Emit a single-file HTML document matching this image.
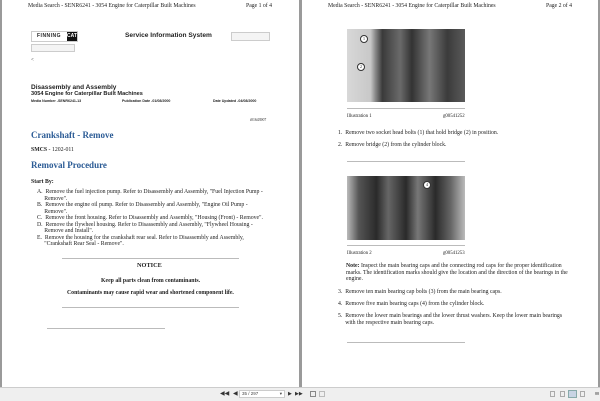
<!DOCTYPE html>
<html><head><meta charset="utf-8"><style>
*{margin:0;padding:0;box-sizing:border-box}
body{width:600px;height:401px;background:#9a9a9a;position:relative;overflow:hidden;font-family:"Liberation Serif",serif;color:#222}
.pg{position:absolute;top:0;height:387px;background:#fff}
.t{position:absolute;white-space:nowrap;font-size:5.8px;line-height:6px}
.s{font-family:"Liberation Sans",sans-serif;font-weight:bold}
.h{color:#2b5b95;font-size:9px;font-weight:bold;line-height:10px}
.ln{position:absolute;height:1px;background:#bbb}
.b{font-weight:bold}
</style></head><body>
<div class="pg" style="left:2px;width:297px"></div>
<div class="pg" style="left:302px;width:296px"></div>
<div style="position:absolute;left:0;top:387px;width:600px;height:14px;background:#efefef;border-top:1px solid #ccc"></div>

<!-- left page -->
<div class="t" style="left:28px;top:3px;font-size:5.75px">Media Search - SENR6241 - 3054 Engine for Caterpillar Built Machines</div>
<div class="t" style="left:246px;top:3px;font-size:5.75px">Page 1 of 4</div>
<div style="position:absolute;left:31px;top:31px;width:47px;height:11px;border:1px solid #ccc"></div>
<div class="t s" style="left:37px;top:33px;font-size:5px;letter-spacing:.5px">FINNING</div>
<div style="position:absolute;left:67px;top:32px;width:10px;height:9px;background:#111;color:#fff;font:bold 5px 'Liberation Sans',sans-serif;text-align:center;line-height:9px">CAT</div>
<div style="position:absolute;left:31px;top:44px;width:44px;height:8px;border:1px solid #ccc;background:#f4f4f4"></div>
<div class="t s" style="left:125px;top:32px;font-size:6.6px;line-height:7px">Service Information System</div>
<div style="position:absolute;left:231px;top:32px;width:39px;height:9px;border:1px solid #ccc;background:#f4f4f4"></div>
<div class="t" style="left:31px;top:58px;font-size:5px">&lt;</div>
<div class="t s" style="left:31px;top:84px;font-size:6.5px;line-height:7px">Disassembly and Assembly</div>
<div class="t s" style="left:31px;top:91px;font-size:5.6px">3054 Engine for Caterpillar Built Machines</div>
<div class="t s" style="left:31px;top:98px;font-size:3.6px">Media Number -SENR6241-13</div>
<div class="t s" style="left:122px;top:98px;font-size:3.6px">Publication Date -01/08/2000</div>
<div class="t s" style="left:213px;top:98px;font-size:3.6px">Date Updated -04/08/2000</div>
<div class="t" style="left:250px;top:117px;font-size:3.8px">i01643907</div>
<div class="t h" style="left:31px;top:130px">Crankshaft - Remove</div>
<div class="t" style="left:31px;top:147px"><b>SMCS</b> - 1202-011</div>
<div class="t h" style="left:31px;top:160px">Removal Procedure</div>
<div class="t b" style="left:31px;top:179px">Start By:</div>
<div class="t" style="left:37px;top:189px;line-height:6.5px">A.&nbsp; Remove the fuel injection pump. Refer to Disassembly and Assembly, "Fuel Injection Pump -<br>&nbsp;&nbsp;&nbsp;&nbsp;&nbsp;Remove".<br>B.&nbsp; Remove the engine oil pump. Refer to Disassembly and Assembly, "Engine Oil Pump -<br>&nbsp;&nbsp;&nbsp;&nbsp;&nbsp;Remove".<br>C.&nbsp; Remove the front housing. Refer to Disassembly and Assembly, "Housing (Front) - Remove".<br>D.&nbsp; Remove the flywheel housing. Refer to Disassembly and Assembly, "Flywheel Housing -<br>&nbsp;&nbsp;&nbsp;&nbsp;&nbsp;Remove and Install".<br>E.&nbsp; Remove the housing for the crankshaft rear seal. Refer to Disassembly and Assembly,<br>&nbsp;&nbsp;&nbsp;&nbsp;&nbsp;"Crankshaft Rear Seal - Remove".</div>
<div class="ln" style="left:62px;top:258px;width:177px"></div>
<div class="t b" style="left:137px;top:263px;font-size:6.3px">NOTICE</div>
<div class="t b" style="left:101px;top:278px">Keep all parts clean from contaminants.</div>
<div class="t b" style="left:67px;top:290px">Contaminants may cause rapid wear and shortened component life.</div>
<div class="ln" style="left:62px;top:307px;width:177px"></div>
<div class="ln" style="left:47px;top:328px;width:118px"></div>

<!-- right page -->
<div class="t" style="left:328px;top:3px;font-size:5.75px">Media Search - SENR6241 - 3054 Engine for Caterpillar Built Machines</div>
<div class="t" style="left:546px;top:3px;font-size:5.75px">Page 2 of 4</div>
<div style="position:absolute;left:347px;top:29px;width:118px;height:73px;background:linear-gradient(90deg,#d8d8d8 0,#c8c8c8 20%,#8a8a8a 24%,#3a3a3a 30%,#6a6a6a 45%,#333 55%,#777 70%,#3b3b3b 85%,#5a5a5a 100%)"></div>
<div style="position:absolute;left:360px;top:35px;width:8px;height:8px;border-radius:50%;border:1px solid #333;background:#fff;font-size:4px;text-align:center;line-height:6px">1</div>
<div style="position:absolute;left:357px;top:63px;width:8px;height:8px;border-radius:50%;border:1px solid #333;background:#fff;font-size:4px;text-align:center;line-height:6px">2</div>
<div class="ln" style="left:347px;top:108px;width:118px"></div>
<div class="t" style="left:347px;top:114px;font-size:4.8px">Illustration 1</div>
<div class="t" style="left:443px;top:114px;font-size:4.8px">g00541252</div>
<div class="t" style="left:338px;top:127px;line-height:12px">1.&nbsp; Remove two socket head bolts (1) that hold bridge (2) in position.<br>2.&nbsp; Remove bridge (2) from the cylinder block.</div>
<div class="ln" style="left:347px;top:161px;width:118px"></div>
<div style="position:absolute;left:347px;top:176px;width:118px;height:64px;background:linear-gradient(90deg,#bbb 0,#555 10%,#2a2a2a 25%,#666 35%,#2a2a2a 50%,#777 60%,#2a2a2a 75%,#666 88%,#bbb 100%)"></div>
<div style="position:absolute;left:423px;top:181px;width:8px;height:8px;border-radius:50%;background:#fff;border:1px solid #333;font-size:4px;text-align:center;line-height:6px">4</div>
<div class="ln" style="left:347px;top:245px;width:118px"></div>
<div class="t" style="left:347px;top:251px;font-size:4.8px">Illustration 2</div>
<div class="t" style="left:443px;top:251px;font-size:4.8px">g00541253</div>
<div class="t" style="left:346px;top:263px;line-height:6.6px"><b>Note:</b> Inspect the main bearing caps and the connecting rod caps for the proper identification<br>marks. The identification marks should give the location and the direction of the bearings in the<br>engine.</div>
<div class="t" style="left:338px;top:289px">3.&nbsp; Remove ten main bearing cap bolts (3) from the main bearing caps.</div>
<div class="t" style="left:338px;top:301px">4.&nbsp; Remove five main bearing caps (4) from the cylinder block.</div>
<div class="t" style="left:338px;top:313px;line-height:6.5px">5.&nbsp; Remove the lower main bearings and the lower thrust washers. Keep the lower main bearings<br>&nbsp;&nbsp;&nbsp;&nbsp;&nbsp;with the respective main bearing caps.</div>
<div class="ln" style="left:347px;top:342px;width:118px"></div>

<!-- toolbar -->
<div class="t" style="left:220px;top:391px;font-size:6px;color:#333;font-family:'DejaVu Sans',sans-serif">◀◀ &nbsp;◀</div>
<div style="position:absolute;left:239px;top:390px;width:46px;height:8px;background:#fff;border:1px solid #ccc;font:4.5px 'Liberation Sans',sans-serif;line-height:6px;padding-left:2px;color:#444">35 / 297<span style="float:right;padding-right:2px">▾</span></div>
<div class="t" style="left:288px;top:391px;font-size:5px;color:#333;font-family:'DejaVu Sans',sans-serif">▶ &nbsp;▶▶</div>
<div style="position:absolute;left:310px;top:391px;width:6px;height:6px;border:1px solid #888"></div>
<div style="position:absolute;left:319px;top:391px;width:6px;height:6px;border:1px solid #bbb"></div>
<div style="position:absolute;left:550px;top:391px;width:5px;height:6px;border:1px solid #aaa"></div>
<div style="position:absolute;left:560px;top:391px;width:5px;height:6px;border:1px solid #aaa"></div>
<div style="position:absolute;left:568px;top:390px;width:9px;height:8px;background:#c8d4e4;border:1px solid #8aa"></div>
<div style="position:absolute;left:580px;top:391px;width:5px;height:6px;border:1px solid #aaa"></div>
<div class="t" style="left:595px;top:391px;font-size:4px">88</div>
</body></html>
